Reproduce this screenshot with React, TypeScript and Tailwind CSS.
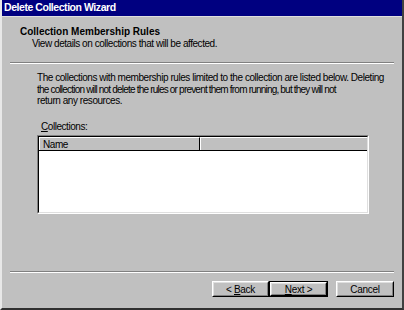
import { ReactNode } from 'react'

function Button({ children, isDefault, wide }: { children: ReactNode; isDefault?: boolean; wide?: boolean }) {
  return (
    <div className={isDefault ? 'border border-black' : ''}>
      <div className="border border-t-white border-l-white border-r-black border-b-black">
        <div
          className={`flex items-center justify-center border border-t-[#dfdfdf] border-l-[#dfdfdf] border-r-[#808080] border-b-[#808080] text-[10px] tracking-[-0.3px] text-black ${
            isDefault ? 'w-[55px] h-[12px]' : wide ? 'w-[56px] h-[14px]' : 'w-[55px] h-[14px]'
          }`}
        >
          {children}
        </div>
      </div>
    </div>
  )
}

export default function App() {
  return (
    <div
      className="w-[404px] h-[310px] bg-[#c0c0c0] flex flex-col overflow-hidden border-l-2 border-l-[#e8e8e8] border-r-2 border-r-[#404040] border-b-2 border-b-[#303030]"
      style={{ fontFamily: '"Liberation Sans", Arial, sans-serif' }}
    >
      {/* title bar */}
      <div className="h-[17px] bg-[#000080] flex items-center pl-[4px] -ml-[2px] -mr-[2px] border-b border-b-[#dfdfdf]">
        <span className="text-white text-[10.5px] font-bold tracking-[-0.45px] whitespace-nowrap">Delete Collection Wizard</span>
      </div>

      {/* header */}
      <div className="h-[45px] pl-[18px] pt-[9px] leading-[11px] text-[10px] text-black whitespace-nowrap">
        <div className="font-bold">Collection Membership Rules</div>
        <div className="pl-[12px] mt-[1px] tracking-[-0.45px]">View details on collections that will be affected.</div>
      </div>
      <div className="mx-[8px] border-t border-t-[#808080] border-b border-b-white" />

      {/* body */}
      <div className="flex-1 pl-[35px] pt-[8px] text-[10px] leading-[11.5px] text-black whitespace-nowrap tracking-[-0.45px]">
        <p>
          The collections with membership rules limited to the collection are listed below. Deleting
          <br />
          <span className="tracking-[-0.8px]">
            the collection will not delete the rules or prevent them from running, but they will not
          </span>
          <br />
          return any resources.
        </p>
        <div className="mt-[14px] pl-[4px] leading-[12px]">
          <span className="underline">C</span>ollections:
        </div>
        <div className="mt-[2px] w-[332px] h-[79px] border border-t-[#808080] border-l-[#808080] border-r-white border-b-white">
          <div className="h-full border border-t-black border-l-black border-r-[#dfdfdf] border-b-[#dfdfdf] bg-white flex flex-col">
            <div className="flex h-[14px] bg-[#c0c0c0] border-b border-b-black">
              <div className="w-[161px] pl-[3px] leading-[13px] border-r border-r-black border-t border-t-white border-l border-l-white">
                Name
              </div>
              <div className="flex-1 border-t border-t-white border-l border-l-white" />
            </div>
          </div>
        </div>
      </div>

      {/* footer */}
      <div className="mx-[8px] border-t border-t-[#808080] border-b border-b-white" />
      <div className="h-[35px] flex items-start justify-end pt-[8px] pr-[8px]">
        <Button>
          <span>
            &lt; <span className="underline">B</span>ack
          </span>
        </Button>
        <Button isDefault>
          <span>
            <span className="underline">N</span>ext &gt;
          </span>
        </Button>
        <div className="w-[8px]" />
        <Button wide>Cancel</Button>
      </div>
    </div>
  )
}
